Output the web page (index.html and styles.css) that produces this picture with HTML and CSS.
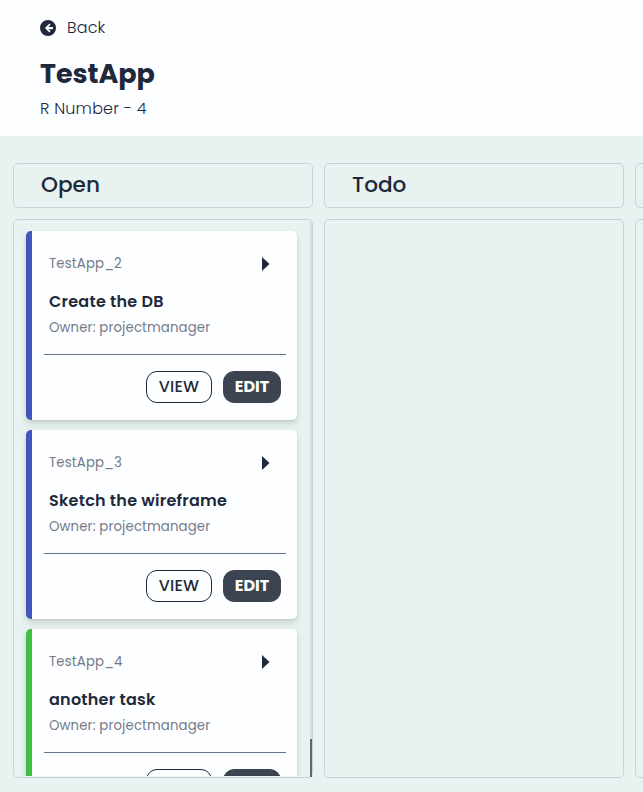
FILE: index.html
```html
<!DOCTYPE html>
<html lang="en">
<head>
<meta charset="utf-8">
<title>TestApp</title>
<link rel="stylesheet" href="styles.css">
</head>
<body>
<header class="header">
  <a class="back">
    <svg class="back-icon" viewBox="0 0 512 512"><path fill="currentColor" d="M256 0a256 256 0 1 1 0 512 256 256 0 0 1 0-512zm29 384c9 9 24 9 33 0l7-7c10-10 9-25 0-34l-54-51h121c13 0 24-11 24-24v-24c0-13-11-24-24-24H271l54-51c10-9 10-25 0-34l-7-7c-9-9-24-9-33 0L173 239c-9 9-9 24 0 34z"/></svg>
    <span class="back-text">Back</span>
  </a>
  <h1 class="title">TestApp</h1>
  <p class="number">R Number - 4</p>
</header>
<main class="board">
  <section class="column">
    <h2 class="column-title">Open</h2>
    <div class="column-body">
      <div class="cards">
        <article class="card">
          <div class="card-top"><span class="card-id">TestApp_2</span><svg class="arrow" viewBox="0 0 8 14"><path fill="currentColor" d="M0 0L7.5 7L0 14z"/></svg></div>
          <h3 class="card-title">Create the DB</h3>
          <p class="owner">Owner: projectmanager</p>
          <div class="actions"><button class="btn view">VIEW</button><button class="btn edit">EDIT</button></div>
        </article>
        <article class="card">
          <div class="card-top"><span class="card-id">TestApp_3</span><svg class="arrow" viewBox="0 0 8 14"><path fill="currentColor" d="M0 0L7.5 7L0 14z"/></svg></div>
          <h3 class="card-title">Sketch the wireframe</h3>
          <p class="owner">Owner: projectmanager</p>
          <div class="actions"><button class="btn view">VIEW</button><button class="btn edit">EDIT</button></div>
        </article>
        <article class="card green">
          <div class="card-top"><span class="card-id">TestApp_4</span><svg class="arrow" viewBox="0 0 8 14"><path fill="currentColor" d="M0 0L7.5 7L0 14z"/></svg></div>
          <h3 class="card-title">another task</h3>
          <p class="owner">Owner: projectmanager</p>
          <div class="actions"><button class="btn view">VIEW</button><button class="btn edit">EDIT</button></div>
        </article>
      </div>
      <div class="scrollbar"><div class="thumb"></div></div>
    </div>
  </section>
  <section class="column">
    <h2 class="column-title">Todo</h2>
    <div class="column-body"></div>
  </section>
  <section class="column">
    <h2 class="column-title"></h2>
    <div class="column-body"></div>
  </section>
</main>
</body>
</html>
```
FILE: styles.css
```css
* { box-sizing: border-box; margin: 0; padding: 0; }
body {
  height: 792px;
  overflow: hidden;
  background: #e8f3f1;
  color: #1e293b;
  font-family: Poppins, Inter, "Open Sans", sans-serif;
}
.header { height: 136px; padding: 16px 40px 0; background: #fdfeff; }
.back { display: flex; align-items: center; height: 24px; font-size: 16px; font-weight: 300; }
.back-icon { width: 16px; height: 16px; margin-right: 11px; }
.back-text { line-height: 22px; padding-bottom: 1px; letter-spacing: .15px; }
.title { margin-top: 16px; font-size: 27px; line-height: 36px; font-weight: 700; letter-spacing: -.05px; }
.number { margin-top: 5px; font-size: 16px; line-height: 24px; font-weight: 300; letter-spacing: .18px; }
.board { display: flex; gap: 11px; padding: 27px 0 0 13px; overflow: hidden; }
.column { flex: 0 0 300px; }
.column-title {
  height: 45px;
  padding-left: 27px;
  border: 1px solid #c5d3de;
  border-radius: 5px;
  font-size: 21.6px;
  line-height: 42px;
  font-weight: 500;
}
.column-body {
  position: relative;
  height: 559px;
  margin-top: 11px;
  padding-bottom: 1px;
  border: 1px solid #c5d3de;
  border-radius: 5px;
}
.cards { height: 100%; padding: 11px 15px 0 12px; overflow: hidden; }
.card {
  height: 189px;
  margin-bottom: 10px;
  padding: 20px 11px 0 12px;
  border-left: 6px solid #4056bd;
  border-radius: 5px;
  background: #fdfeff;
  box-shadow: 0 4px 7px rgba(0, 0, 0, .12), 0 1px 3px rgba(0, 0, 0, .08);
}
.card.green { border-left-color: #40bf45; }
.card-top { display: flex; align-items: center; justify-content: space-between; height: 26px; padding: 0 16px 0 5px; }
.card-id { color: #737b89; font-size: 13.3px; letter-spacing: .15px; }
.arrow { width: 8px; height: 14px; }
.card-title { margin: 13px 0 0 5px; font-size: 16px; line-height: 24px; font-weight: 600; letter-spacing: .24px; white-space: nowrap; }
.owner { margin: 4px 0 0 5px; color: #737b89; font-size: 13.3px; line-height: 20px; letter-spacing: .12px; }
.actions { display: flex; justify-content: flex-end; gap: 11px; margin-top: 16px; padding: 16px 5px 0 0; border-top: 1px solid #64748b; }
.btn { height: 32px; border: 1px solid #1e293b; border-radius: 11px; font: 500 16px/28px Poppins, Inter, sans-serif; color: #1e293b; background: #fdfeff; }
.view { width: 66px; letter-spacing: .2px; }
.edit { width: 58px; border-color: #3d4451; background: #3d4451; color: #fff; font-weight: 700; }
.scrollbar { position: absolute; top: 0; right: 0; width: 2px; height: 557px; background: #dddde0; }
.thumb { height: 38px; margin-top: 519px; background: #5f6864; }
```
